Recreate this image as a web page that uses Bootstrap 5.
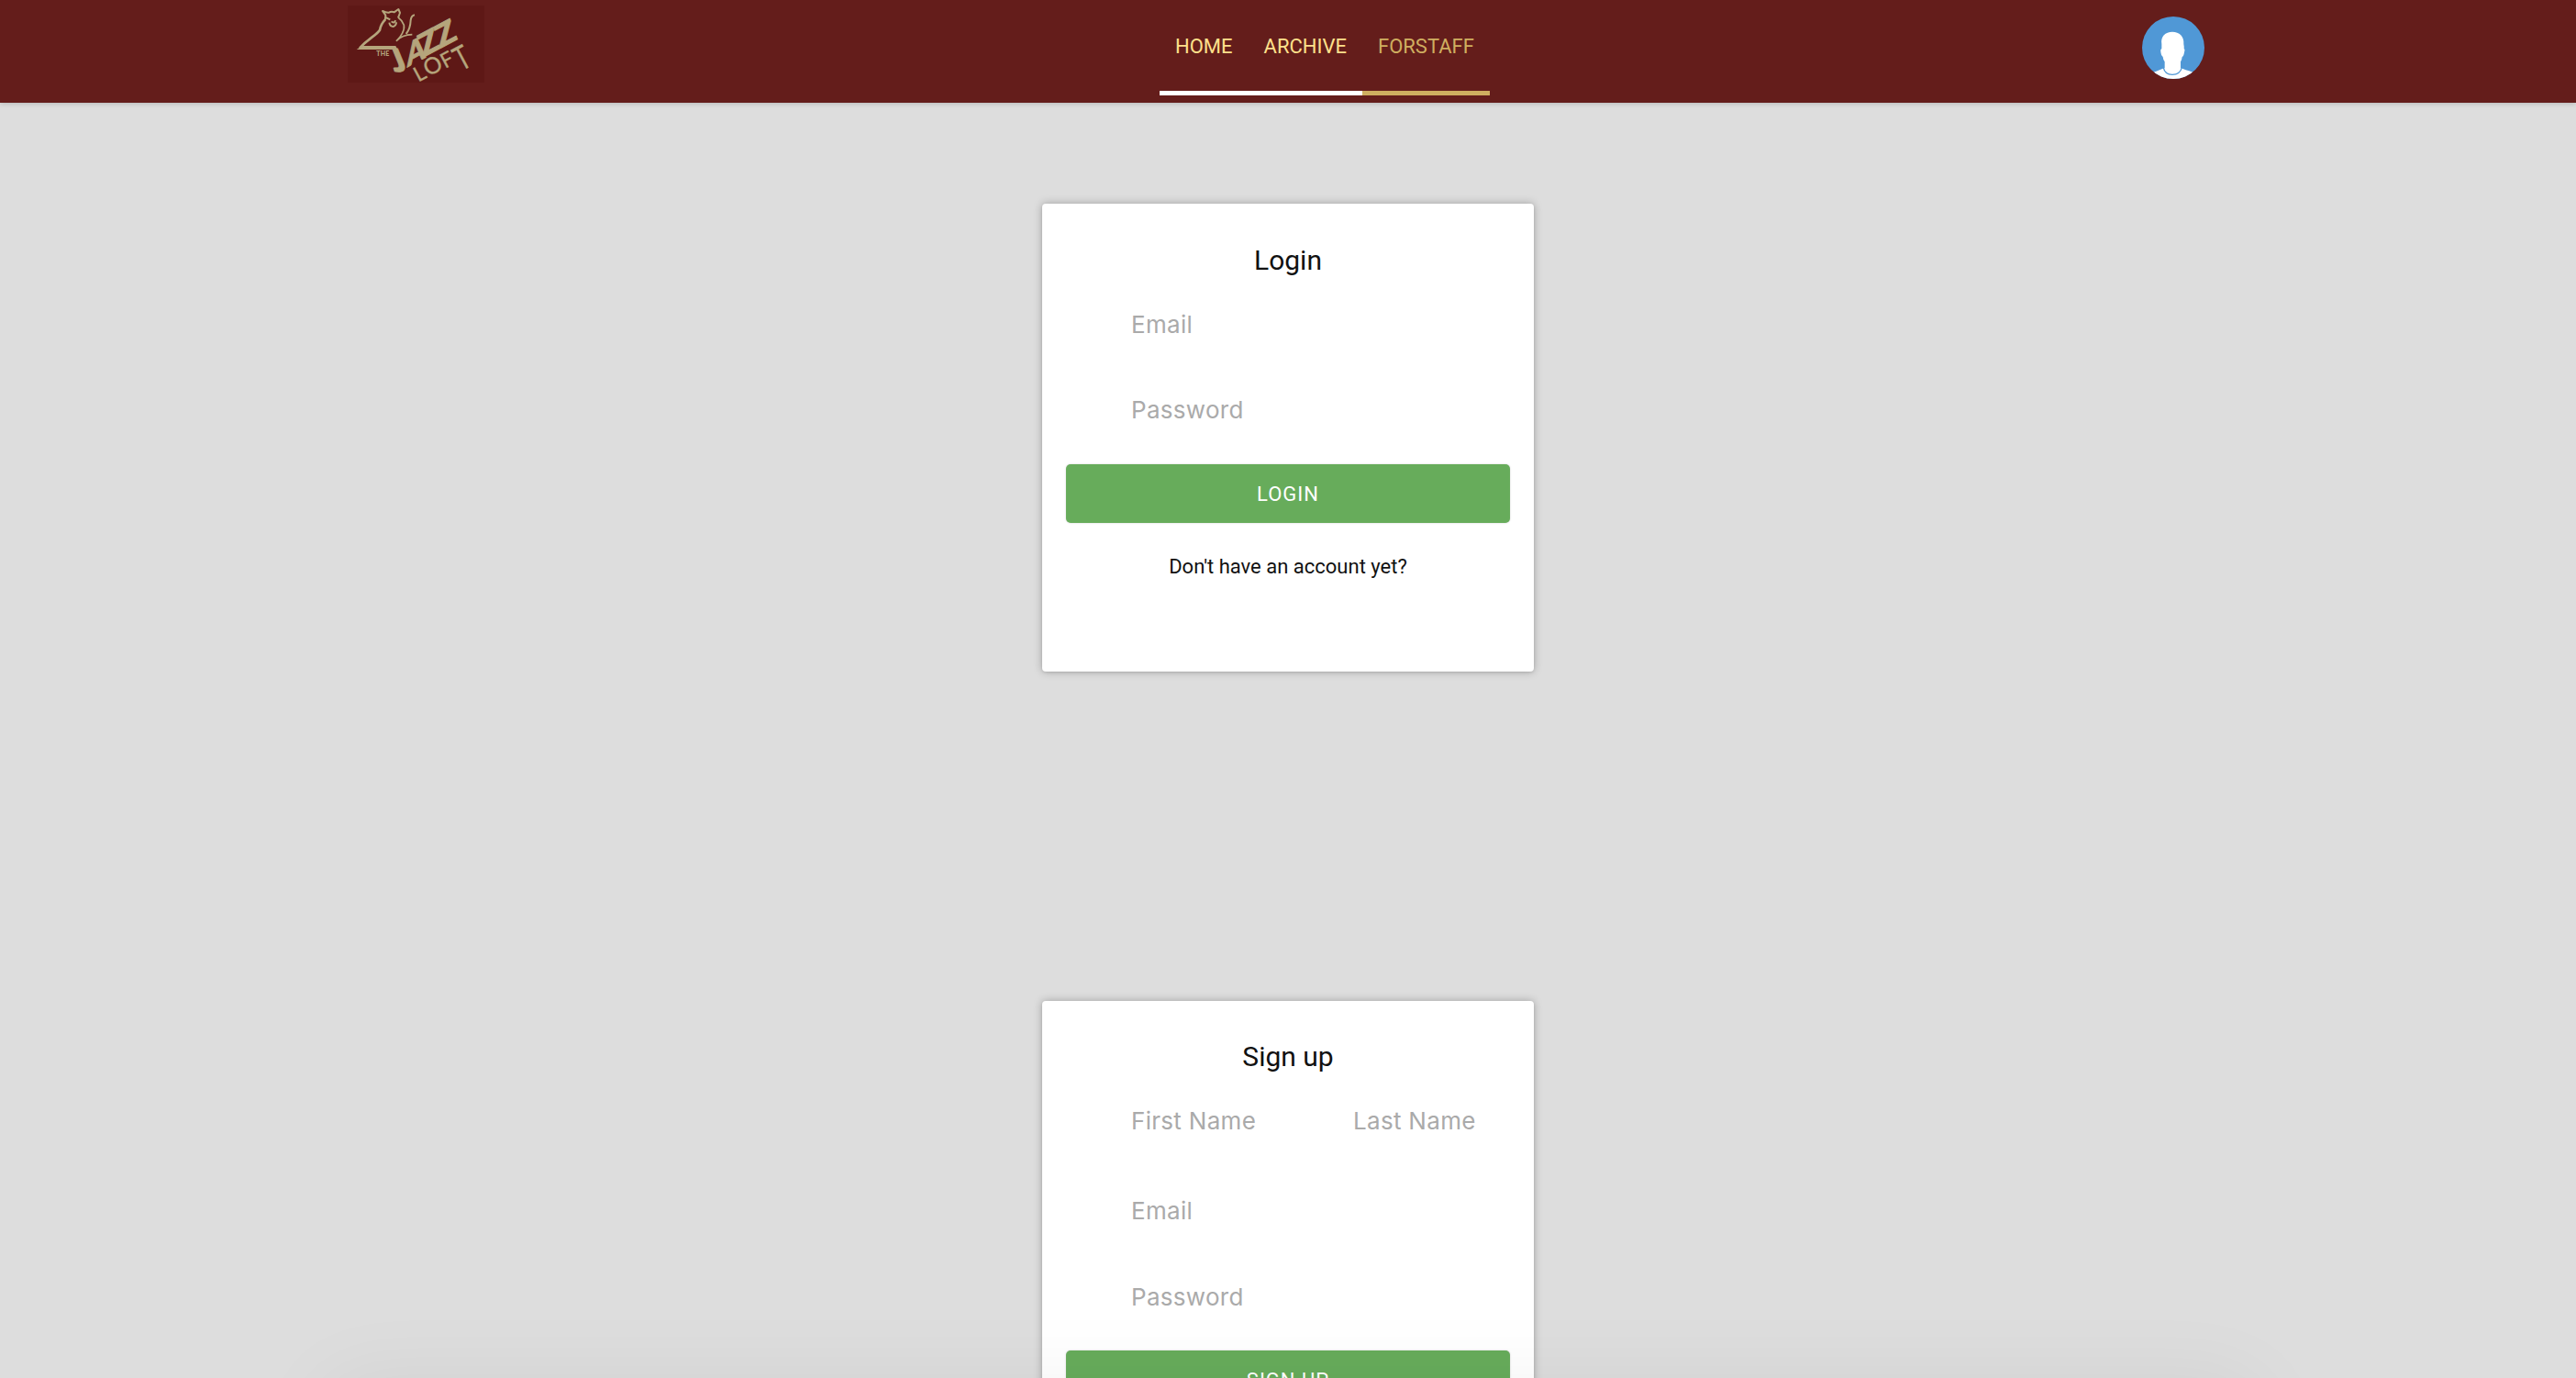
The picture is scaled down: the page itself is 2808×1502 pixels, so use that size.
<!DOCTYPE html>
<html lang="en">
<head>
<meta charset="utf-8">
<title>The Jazz Loft</title>
<link rel="stylesheet" href="https://cdn.jsdelivr.net/npm/bootstrap@5.3.0/dist/css/bootstrap.min.css">
<style>
html{overflow:hidden}
body{font-family:Roboto,sans-serif;background:#ddd;color:#111}
.page-frame{height:1502px;overflow:hidden}
.site-bar{background:#641d1b;height:112px;padding:0 379px;box-shadow:0 1px 5px rgba(0,0,0,.18)}
.brand-logo{width:149px;height:84px;margin-top:6px;display:block;overflow:visible}
.side-l{width:885px}
.tabs-nav .nav-link{font-size:22px;line-height:26px;padding:38px 17px 35px;height:104px;border-bottom:5px solid #fff;color:#ffe08b;border-radius:0}
.tabs-nav .nav-link.staff{color:#cfae60;border-color:#cfae60}
.avatar-pic{width:68px;height:68px;margin:18px 26px 0 0;display:block}
.auth-card{width:536px;border:0;border-radius:4px;padding:42px 26px 0;box-shadow:0 0 10px rgba(0,0,0,.28),0 1px 3px rgba(0,0,0,.08)}
.login-box{height:510px;margin-top:110px}
.signup-box{height:604px;margin-top:359px;padding-top:41px}
.auth-title{font-size:30px;line-height:40px;font-weight:400;margin:0 0 28px}
.auth-input,.auth-input:focus{font:26px/44px Inter,sans-serif;letter-spacing:.3px;height:44px;padding:0 0 0 71px;border:0;background:none;border-radius:0}
.auth-input::placeholder{color:#aaa;opacity:1}
.auth-btn{height:64px;border:0;border-radius:5px;background:#67ac5b;color:#fff;font-size:22px;letter-spacing:1px;line-height:64px;padding:1px 0 0;box-shadow:0 0 2px rgba(0,0,0,.22)}
.hint{font-size:22px;line-height:33px;margin:31px 0 0}
.gap-a{margin-bottom:49px}
.gap-b{margin-bottom:37px}
.gap-c{margin-bottom:54px}
.gap-d{margin-bottom:50px}
.gap-e{margin-bottom:36px}
.dock-shade{position:absolute;left:350px;width:2116px;top:1502px;height:120px;border-radius:40px;box-shadow:0 0 90px rgba(0,0,0,.05);pointer-events:none}
</style>
<script src="https://cdn.jsdelivr.net/npm/bootstrap@5.3.0/dist/js/bootstrap.bundle.min.js"></script>
</head>
<body>
<div class="page-frame position-relative">
<header class="site-bar d-flex align-items-start justify-content-between">
  <div class="side-l">
    <svg class="brand-logo" viewBox="29 18 447 252">
      <rect x="29" y="18" width="447" height="252" fill="#5e1816"/>
      <!-- cat: back, head and tail -->
      <g fill="none" stroke="#b5a57c" stroke-linejoin="round">
        <path d="M151 65Q137 80 134 98C122 116 100 124 68 157" stroke-width="8"/>
        <path d="M151 68L153 50 143 36Q156 42 164 41Q172 36 181 40L195 30 200 42 194 58" stroke-width="6"/>
        <path d="M153 57L168 64M165 74Q167 87 178 87Q188 84 188 73M172 70Q180 78 186 67" stroke-width="6"/>
        <path d="M194 57Q207 66 213 82C216 100 202 122 189 133Q207 114 240 113" stroke-width="5"/>
        <path d="M248 49Q237 51 235 66Q234 94 220 111" stroke-width="6"/>
      </g>
      <path d="M58 162L76 150H186L192 162Z" fill="#b5a57c"/>
      <g fill="#b5a57c" font-family="Lato, sans-serif">
        <text x="123" y="183" font-size="21" font-weight="900" textLength="42">THE</text>
        <g font-weight="900" stroke="#b5a57c" stroke-width="3">
          <text transform="matrix(.98 0 .38 .92 182 234)" font-size="112" textLength="50" lengthAdjust="spacingAndGlyphs">J</text>
          <text transform="matrix(.88 -.47 .06 .98 224 220)" font-size="106" textLength="68" lengthAdjust="spacingAndGlyphs">A</text>
          <text transform="matrix(.88 -.47 .36 .92 277 187)" font-size="100" textLength="66" lengthAdjust="spacingAndGlyphs">Z</text>
          <text transform="matrix(.88 -.47 .36 .92 331 158)" font-size="100" textLength="68" lengthAdjust="spacingAndGlyphs">Z</text>
        </g>
        <g stroke="#b5a57c" stroke-width="1">
          <text transform="translate(260 269) rotate(-28)" font-size="68">L</text>
          <text transform="translate(293 251) rotate(-28)" font-size="74">O</text>
          <text transform="translate(348 225) rotate(-28)" font-size="68">F</text>
          <text transform="translate(400 233) rotate(-28) scale(.72 1)" font-size="108">T</text>
        </g>
      </g>
    </svg>
  </div>
  <nav class="nav tabs-nav flex-nowrap flex-grow-1">
    <a class="nav-link" href="#">HOME</a>
    <a class="nav-link" href="#">ARCHIVE</a>
    <a class="nav-link staff" href="#">FORSTAFF</a>
  </nav>
  <svg class="avatar-pic" viewBox="0 0 204 204">
    <clipPath id="disc"><circle cx="102" cy="102" r="102"/></clipPath>
    <g clip-path="url(#disc)">
      <rect width="204" height="204" fill="#5098d6"/>
      <path d="M64 90C60 65 76 50 99 50S138 65 136 90Q138 100 137 105Q141 107 138 117Q136 130 131 132Q130 142 126 148V168Q140 174 166 182L190 204H10L34 184Q60 174 74 168V148Q69 142 68 132Q62 128 61 116Q59 107 64 105Z" fill="#fff"/>
      <path d="M70 167Q74 190 99 190T130 167" fill="none" stroke="#5098d6" stroke-width="4"/>
    </g>
  </svg>
</header>
<main class="d-flex flex-column align-items-center">
  <form class="card auth-card login-box">
    <h1 class="auth-title text-center">Login</h1>
    <input class="form-control auth-input gap-a" type="email" placeholder="Email">
    <input class="form-control auth-input gap-b" type="password" placeholder="Password">
    <button class="btn auth-btn w-100" type="button">LOGIN</button>
    <p class="hint text-center">Don't have an account yet?</p>
  </form>
  <form class="card auth-card signup-box">
    <h2 class="auth-title text-center">Sign up</h2>
    <div class="row g-0 gap-c">
      <div class="col-6"><input class="form-control auth-input" type="text" placeholder="First Name"></div>
      <div class="col-6"><input class="form-control auth-input" type="text" placeholder="Last Name"></div>
    </div>
    <input class="form-control auth-input gap-d" type="email" placeholder="Email">
    <input class="form-control auth-input gap-e" type="password" placeholder="Password">
    <button class="btn auth-btn w-100" type="button">SIGN UP</button>
  </form>
</main>
<div class="dock-shade"></div>
</div>
</body>
</html>
